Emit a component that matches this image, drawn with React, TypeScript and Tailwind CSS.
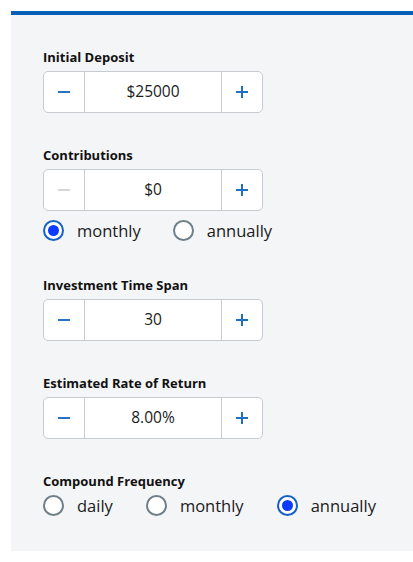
import React, { useState } from 'react';

const font = { fontFamily: '"Open Sans", "Liberation Sans", sans-serif' };

function Stepper({ value, disabledMinus }: { value: string; disabledMinus?: boolean }) {
  return (
    <div className="flex h-[42px] w-[220px] rounded-[5px] border border-[#c5cbd1] bg-white">
      <button className="flex w-[41px] items-center justify-center border-r border-[#c5cbd1]">
        <span className={`block h-[2px] w-[12px] ${disabledMinus ? 'bg-[#d3d7db]' : 'bg-[#2a72c4]'}`} />
      </button>
      <div className="flex flex-1 items-center justify-center text-[15.5px] text-[#1b1b1b]">{value}</div>
      <button className="relative flex w-[41px] items-center justify-center border-l border-[#c5cbd1]">
        <span className="absolute h-[2px] w-[12px] bg-[#1f6fc7]" />
        <span className="absolute h-[12px] w-[2px] bg-[#1f6fc7]" />
      </button>
    </div>
  );
}

function Radio({ label, checked, onClick }: { label: string; checked: boolean; onClick: () => void }) {
  return (
    <button onClick={onClick} className="flex h-[21px] items-center gap-[13px]">
      <span
        className={`flex h-[21px] w-[21px] items-center justify-center rounded-full border-2 bg-white ${
          checked ? 'border-[#1660cc]' : 'border-[#6e7f8a]'
        }`}
      >
        {checked && <span className="h-[11px] w-[11px] rounded-full bg-[#0b3bff]" />}
      </span>
      <span className="text-[16.5px] leading-[21px] text-[#1b1b1b]">{label}</span>
    </button>
  );
}

function Label({ children }: { children: React.ReactNode }) {
  return <div className="mb-[6px] text-[13px] font-bold leading-[16px] text-[#111]">{children}</div>;
}

export default function App() {
  const [contrib, setContrib] = useState('monthly');
  const [freq, setFreq] = useState('annually');

  return (
    <div className="h-[562px] bg-white pt-[11px] pl-[11px]" style={font}>
      <div className="border-t-[4px] border-[#0760b8] bg-[#f4f5f7] pl-[32px] pt-[34px] pb-[35px]">
        <Label>Initial Deposit</Label>
        <Stepper value="$25000" />

        <div className="mt-[34px]">
          <Label>Contributions</Label>
          <Stepper value="$0" disabledMinus />
          <div className="mt-[9px] flex gap-[32px]">
            <Radio label="monthly" checked={contrib === 'monthly'} onClick={() => setContrib('monthly')} />
            <Radio label="annually" checked={contrib === 'annually'} onClick={() => setContrib('annually')} />
          </div>
        </div>

        <div className="mt-[36px]">
          <Label>Investment Time Span</Label>
          <Stepper value="30" />
        </div>

        <div className="mt-[34px]">
          <Label>Estimated Rate of Return</Label>
          <Stepper value="8.00%" />
        </div>

        <div className="mt-[34px]">
          <Label>Compound Frequency</Label>
          <div className="mt-[1px] flex gap-[33px]">
            <Radio label="daily" checked={freq === 'daily'} onClick={() => setFreq('daily')} />
            <Radio label="monthly" checked={freq === 'monthly'} onClick={() => setFreq('monthly')} />
            <Radio label="annually" checked={freq === 'annually'} onClick={() => setFreq('annually')} />
          </div>
        </div>
      </div>
    </div>
  );
}
